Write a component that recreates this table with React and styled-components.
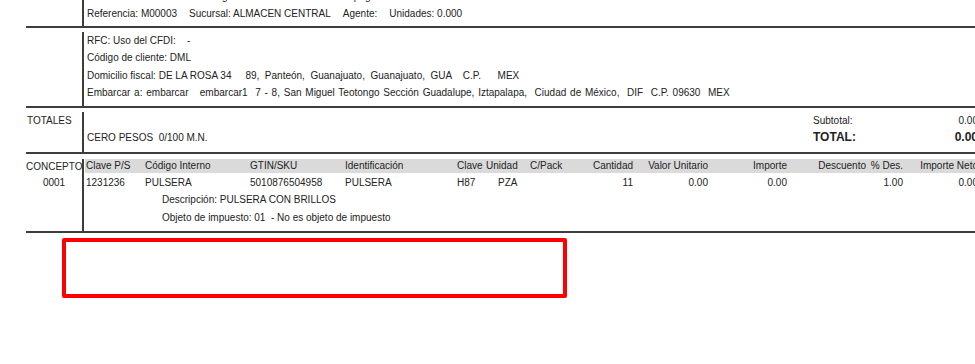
import styled, { createGlobalStyle } from "styled-components";

const GlobalStyle = createGlobalStyle`
  html, body {
    margin: 0;
    padding: 0;
    background: #ffffff;
    overflow: hidden;
  }
  body {
    font-family: "Liberation Sans", Arial, sans-serif;
    font-size: 10px;
    color: #222222;
  }
`;

const Page = styled.div`
  width: 975px;
  height: 364px;
  overflow: hidden;
`;

const Doc = styled.div`
  margin: -12px 0 0 26px;
  width: 960px;
`;

const Section = styled.div`
  display: flex;
  border-bottom: 2px solid #3d3d3d;
`;

const Label = styled.div`
  width: 56px;
  flex: none;
  padding-top: ${(p) => p.$top || 0}px;
  text-align: ${(p) => (p.$center ? "center" : "left")};
`;

const Body = styled.div`
  flex: 1;
  min-width: 0;
  border-left: 2px solid #3d3d3d;
  margin-top: ${(p) => p.$gap ?? 4}px;
  padding-bottom: ${(p) => p.$bottom ?? 4}px;
`;

const Line = styled.div`
  height: ${(p) => p.$h || 17.3}px;
  line-height: ${(p) => p.$h || 17.3}px;
  padding-left: ${(p) => p.$indent ?? 3}px;
  word-spacing: ${(p) => p.$spread || 0}px;
  white-space: pre;
`;

const Fields = styled.div`
  display: flex;
  gap: 12px;
  height: 17.3px;
  line-height: 17.3px;
  padding-left: 3px;
  white-space: pre;
`;

const TotalsBody = styled(Body)`
  display: flex;
`;

const TotalsLeft = styled.div`
  flex: 1;
`;

const TotalsGrid = styled.div`
  display: grid;
  grid-template-columns: 100px 65px;
  padding-right: 8px;
`;

const TotalCell = styled.div`
  height: 17.3px;
  line-height: 17.3px;
  text-align: ${(p) => (p.$right ? "right" : "left")};
  font-weight: ${(p) => (p.$bold ? 700 : 400)};
  font-size: ${(p) => (p.$bold ? 12 : 10)}px;
  white-space: nowrap;
`;

const COLS = "59px 105px 95px 112px 29px 44px 45px 58px 75px 79px 79px 37px 75px";

const HeadRow = styled.div`
  display: grid;
  grid-template-columns: ${COLS};
  height: 14px;
  line-height: 14px;
  padding-left: 1px;
  margin-left: 1px;
  margin-bottom: 1px;
  background: #dadada;
`;

const DataRow = styled.div`
  display: grid;
  grid-template-columns: ${COLS};
  height: 17.3px;
  line-height: 17.3px;
  padding-left: 2px;
`;

const Cell = styled.div`
  white-space: nowrap;
  text-align: ${(p) => (p.$right ? "right" : "left")};
  padding-left: ${(p) => p.$pad || 0}px;
`;

const Highlight = styled.div`
  box-sizing: border-box;
  margin: 5px 0 0 62px;
  width: 505px;
  height: 60px;
  border: 4px solid #ff0000;
  border-radius: 2px;
`;

const columns = [
  { head: "Clave P/S", value: "1231236" },
  { head: "Código Interno", value: "PULSERA" },
  { head: "GTIN/SKU", value: "5010876504958" },
  { head: "Identificación", value: "PULSERA" },
  { head: "Clave", value: "H87" },
  { head: "Unidad", value: "PZA", pad: 12 },
  { head: "C/Pack", value: "" },
  { head: "Cantidad", value: "11", right: true },
  { head: "Valor Unitario", value: "0.00", right: true },
  { head: "Importe", value: "0.00", right: true },
  { head: "Descuento", value: "", right: true },
  { head: "% Des.", value: "1.00", right: true },
  { head: "Importe Neto", value: "0.00", right: true },
];

export default function App() {
  return (
    <Page>
      <GlobalStyle />
      <Doc>
        <Section>
          <Label />
          <Body $gap={0} $bottom={3.4}>
            <Line>{"Fecha: 14/09/2023 12:05    Régimen fiscal: 601    Forma de pago: 99 - POR DEFINIR    Almacén: ALMACEN CENTRAL"}</Line>
            <Fields>
              <span>Referencia: M00003</span>
              <span>Sucursal: ALMACEN CENTRAL</span>
              <span>Agente:</span>
              <span>Unidades: 0.000</span>
            </Fields>
          </Body>
        </Section>

        <Section>
          <Label />
          <Body $gap={4} $bottom={5}>
            <Line>{"RFC: Uso del CFDI:    -"}</Line>
            <Line>{"Código de cliente: DML"}</Line>
            <Line>{"Domicilio fiscal: DE LA ROSA 34     89,  Panteón,  Guanajuato,  Guanajuato,  GUA    C.P.      MEX"}</Line>
            <Line $spread={1}>{"Embarcar a: embarcar   embarcar1  7 - 8, San Miguel Teotongo Sección Guadalupe, Iztapalapa,  Ciudad de México,  DIF  C.P. 09630  MEX"}</Line>
          </Body>
        </Section>

        <Section>
          <Label $top={4}>
            <Line $indent={1}>TOTALES</Line>
          </Label>
          <TotalsBody $gap={4} $bottom={5.4}>
            <TotalsLeft>
              <Line />
              <Line>{"CERO PESOS  0/100 M.N."}</Line>
            </TotalsLeft>
            <TotalsGrid>
              <TotalCell>Subtotal:</TotalCell>
              <TotalCell $right>0.00</TotalCell>
              <TotalCell $bold>TOTAL:</TotalCell>
              <TotalCell $bold $right>0.00</TotalCell>
            </TotalsGrid>
          </TotalsBody>
        </Section>

        <Section>
          <Label $top={5} $center>
            <Line $h={15} $indent={0}>CONCEPTO</Line>
            <Line $indent={0}>0001</Line>
          </Label>
          <Body $gap={5} $bottom={5}>
            <HeadRow>
              {columns.map((c) => (
                <Cell key={c.head} $right={c.right}>{c.head}</Cell>
              ))}
            </HeadRow>
            <DataRow>
              {columns.map((c) => (
                <Cell key={c.head} $right={c.right} $pad={c.pad}>{c.value}</Cell>
              ))}
            </DataRow>
            <Line $indent={78}>Descripción: PULSERA CON BRILLOS</Line>
            <Line $indent={78}>Objeto de impuesto: 01  - No es objeto de impuesto</Line>
          </Body>
        </Section>
      </Doc>
      <Highlight />
    </Page>
  );
}
